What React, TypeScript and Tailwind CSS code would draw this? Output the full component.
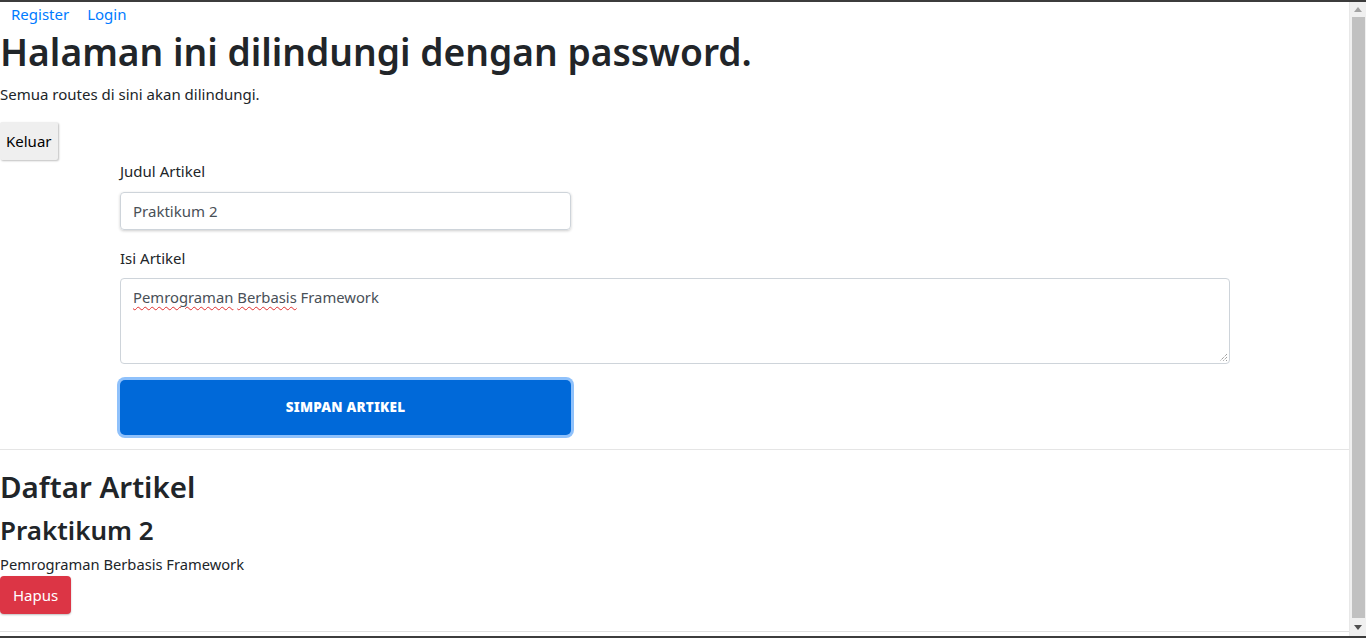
import React from "react";

export default function App() {
  const font = { fontFamily: '"Noto Sans", "Open Sans", sans-serif' };
  return (
    <div className="h-[638px] w-[1366px] overflow-hidden flex flex-col bg-white text-[#212529]" style={font}>
      <div className="h-[2px] bg-[#3c3c3c] shrink-0" />
      <div className="flex flex-1 min-h-0">
        <div className="flex-1 flex flex-col min-w-0">
          <nav className="flex h-[24px] items-center text-[15px] text-[#007bff] leading-none">
            <a className="pl-[11px] pr-[18px]">Register</a>
            <a>Login</a>
          </nav>
          <h1 className="text-[37.2px] font-semibold leading-[48px] mt-[2px]">Halaman ini dilindungi dengan password.</h1>
          <p className="text-[15px] leading-[24px] mt-[6px]">Semua routes di sini akan dilindungi.</p>
          <div className="mt-[16px]">
            <button className="h-[38px] px-[6px] bg-[#efefef] text-[15px] text-black shadow-[1px_1px_2px_rgba(0,0,0,0.25)] rounded-[2px]">Keluar</button>
          </div>
          <div className="pl-[120px] pr-[119px] flex flex-col">
            <label className="text-[15px] leading-[22px]">Judul Artikel</label>
            <div className="mt-[10px] w-[451px] h-[38px] border border-[#ced4da] rounded-[4px] shadow-[0_1px_3px_rgba(0,0,0,0.2)] flex items-center px-[12px] text-[15px] text-[#495057]">Praktikum 2</div>
            <label className="text-[15px] leading-[22px] mt-[17px]">Isi Artikel</label>
            <div className="mt-[9px] h-[86px] border border-[#ced4da] rounded-[4px] px-[12px] pt-[7px] text-[14.8px] text-[#495057] relative">
              <span className="underline decoration-wavy decoration-[#e03030] decoration-1 underline-offset-[3px]">Pemrograman</span>{" "}
              <span className="underline decoration-wavy decoration-[#e03030] decoration-1 underline-offset-[3px]">Berbasis</span>{" "}
              Framework
              <svg className="absolute right-[1px] bottom-[1px]" width="9" height="9" viewBox="0 0 9 9">
                <path d="M8 1L1 8M8 4L4 8M8 7L7 8" stroke="#777" strokeWidth="1" strokeDasharray="1 1" />
              </svg>
            </div>
            <button className="mt-[16px] w-[451px] h-[55px] rounded-[5px] bg-[#0069d9] text-white text-[13.5px] font-black tracking-[0.2px] ring-[3px] ring-[#8fc1fb]">SIMPAN ARTIKEL</button>
          </div>
          <div className="mt-[14px] h-px bg-[#e5e5e5]" />
          <h2 className="text-[29.5px] font-semibold leading-[38px] mt-[18px]">Daftar Artikel</h2>
          <h3 className="text-[26px] font-semibold leading-[34px] mt-[7px]">Praktikum 2</h3>
          <p className="text-[14.7px] leading-[24px] mt-[5px]">Pemrograman Berbasis Framework</p>
          <div>
            <button className="h-[38px] px-[13px] bg-[#dc3545] text-white text-[15px] rounded-[4px] shadow-[0_1px_2px_rgba(0,0,0,0.25)]">Hapus</button>
          </div>
          <div className="flex-1" />
          <div className="h-px bg-[#e0e0e0] mb-[4px]" />
        </div>
        <div className="w-[17px] bg-[#f0f0f0] flex flex-col items-center shrink-0 border-l border-[#e8e8e8]">
          <div className="h-[14px] flex items-center justify-center">
            <svg width="8" height="5" viewBox="0 0 8 5"><path d="M4 0L8 5H0z" fill="#a3a3a3" /></svg>
          </div>
          <div className="flex-1 w-[13px] bg-[#c1c1c1] my-[1px]" />
          <div className="h-[17px] flex items-center justify-center">
            <svg width="8" height="5" viewBox="0 0 8 5"><path d="M0 0H8L4 5z" fill="#505050" /></svg>
          </div>
        </div>
      </div>
      <div className="h-[2px] bg-[#3c3c3c] shrink-0" />
    </div>
  );
}
